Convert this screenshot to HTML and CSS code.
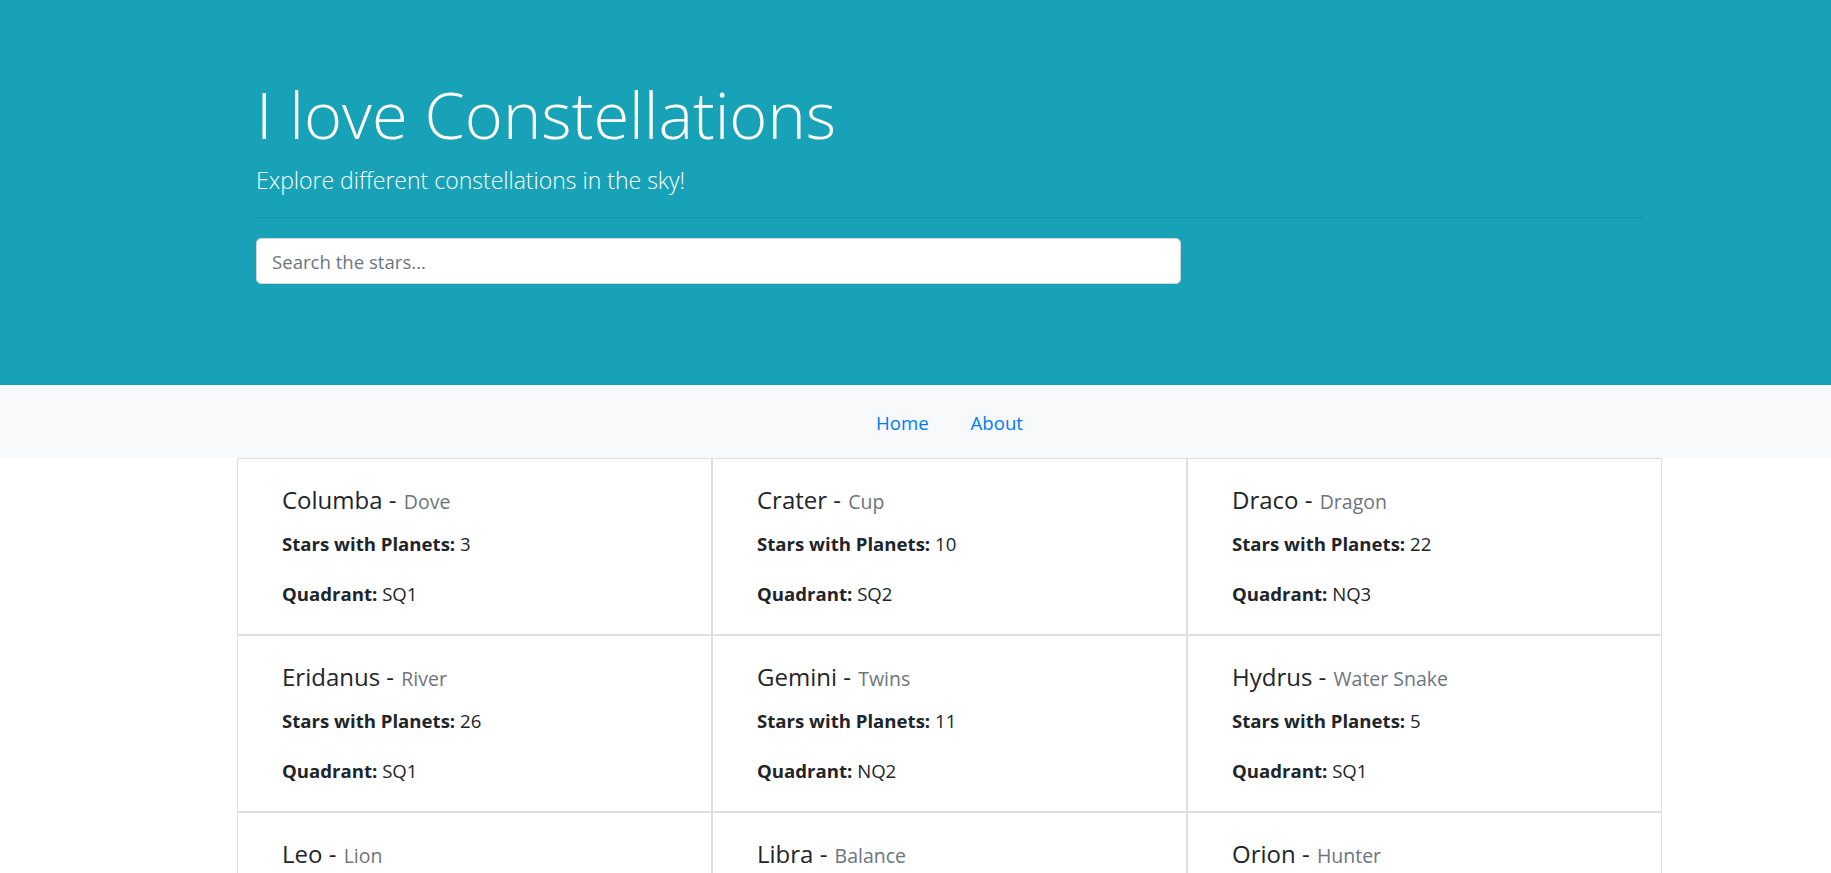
FILE: index.html
```html
<!DOCTYPE html>
<html lang="en">
<head>
<meta charset="utf-8">
<title>I love Constellations</title>
<link rel="stylesheet" href="styles.css">
</head>
<body>
<header class="hero">
  <div class="hero-inner">
    <h1 class="hero-title">I love Constellations</h1>
    <p class="hero-lead">Explore different constellations in the sky!</p>
    <hr class="hero-rule">
    <input class="search" type="text" placeholder="Search the stars...">
  </div>
</header>
<nav class="nav">
  <div class="nav-inner">
    <a class="nav-link" href="#">Home</a>
    <a class="nav-link" href="#">About</a>
  </div>
</nav>
<main class="grid">
  <div class="card"><h5 class="card-title">Columba - <small class="muted">Dove</small></h5><p class="card-line"><b>Stars with Planets:</b> 3</p><p class="card-line"><b>Quadrant:</b> SQ1</p></div>
  <div class="card"><h5 class="card-title">Crater - <small class="muted">Cup</small></h5><p class="card-line"><b>Stars with Planets:</b> 10</p><p class="card-line"><b>Quadrant:</b> SQ2</p></div>
  <div class="card"><h5 class="card-title">Draco - <small class="muted">Dragon</small></h5><p class="card-line"><b>Stars with Planets:</b> 22</p><p class="card-line"><b>Quadrant:</b> NQ3</p></div>
  <div class="card"><h5 class="card-title">Eridanus - <small class="muted">River</small></h5><p class="card-line"><b>Stars with Planets:</b> 26</p><p class="card-line"><b>Quadrant:</b> SQ1</p></div>
  <div class="card"><h5 class="card-title">Gemini - <small class="muted">Twins</small></h5><p class="card-line"><b>Stars with Planets:</b> 11</p><p class="card-line"><b>Quadrant:</b> NQ2</p></div>
  <div class="card"><h5 class="card-title">Hydrus - <small class="muted">Water Snake</small></h5><p class="card-line"><b>Stars with Planets:</b> 5</p><p class="card-line"><b>Quadrant:</b> SQ1</p></div>
  <div class="card"><h5 class="card-title">Leo - <small class="muted">Lion</small></h5><p class="card-line"><b>Stars with Planets:</b> 12</p><p class="card-line"><b>Quadrant:</b> NQ2</p></div>
  <div class="card"><h5 class="card-title">Libra - <small class="muted">Balance</small></h5><p class="card-line"><b>Stars with Planets:</b> 3</p><p class="card-line"><b>Quadrant:</b> SQ3</p></div>
  <div class="card"><h5 class="card-title">Orion - <small class="muted">Hunter</small></h5><p class="card-line"><b>Stars with Planets:</b> 10</p><p class="card-line"><b>Quadrant:</b> NQ1</p></div>
</main>
</body>
</html>
```
FILE: styles.css
```css
* { box-sizing: border-box; }
body {
  margin: 0;
  font-family: "Open Sans", "Noto Sans", sans-serif;
  font-size: 18.6px;
  line-height: 30px;
  color: #212529;
  background: #fff;
}
.hero {
  background: #17a2b8;
  color: #fff;
  height: 385px;
}
.hero-inner {
  margin-left: 256px;
  width: 1387px;
  padding-top: 72px;
}
.hero-title {
  margin: 0 0 7px;
  font-size: 65px;
  font-weight: 300;
  line-height: 84px;
}
.hero-lead {
  margin: 0;
  font-size: 23px;
  font-weight: 300;
  line-height: 34px;
}
.hero-rule {
  margin: 20px 0;
  border: 0;
  border-top: 1px solid rgba(0,0,0,0.1);
}
.search {
  display: block;
  width: 925px;
  height: 46px;
  padding: 0 15px;
  border: 1px solid #ced4da;
  border-radius: 5px;
  font-family: inherit;
  font-size: 18.6px;
  color: #495057;
  background: #fff;
}
.search::placeholder { color: #6c757d; }
.nav {
  background: #f8f9fa;
  height: 73px;
  padding-top: 3px;
}
.nav-inner {
  margin-left: 237px;
  width: 1425px;
  height: 100%;
  display: flex;
  justify-content: center;
  align-items: center;
}
.nav-link {
  padding: 0 21px;
  color: #007bff;
  text-decoration: none;
  line-height: 30px;
}
.grid {
  margin-left: 237px;
  width: 1425px;
  display: grid;
  grid-template-columns: repeat(3, 1fr);
}
.card {
  border: 1px solid #dfdfdf;
  padding: 26px 44px 25px;
}
.card-title {
  margin: 0 0 14px;
  font-size: 24px;
  font-weight: 500;
  line-height: 30px;
}
.muted {
  font-size: 19.5px;
  line-height: 1;
  color: #6c757d;
  margin-left: 1px;
}
.card-line { margin: 0 0 20px; }
.card-line:last-child { margin-bottom: 0; }
```
